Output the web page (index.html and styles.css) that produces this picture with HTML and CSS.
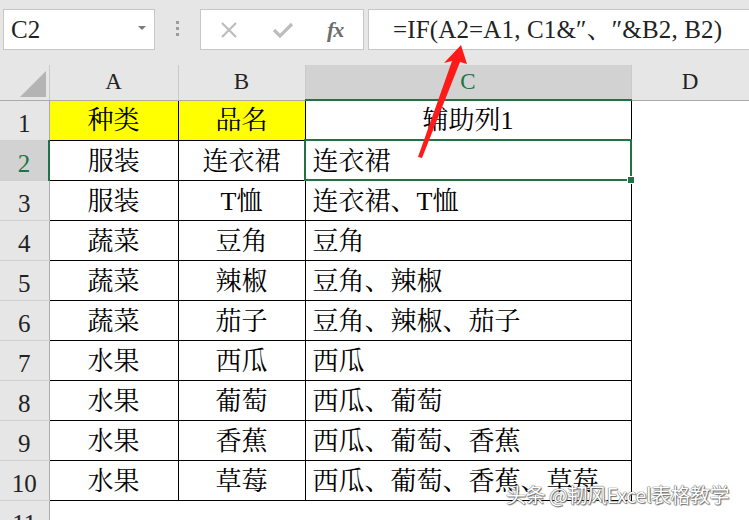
FILE: index.html
```html
<!DOCTYPE html>
<html lang="zh">
<head>
  <meta charset="UTF-8">
  <title>辅助列1</title>
  <link rel="stylesheet" href="styles.css">
</head>
<body>
  <div class="sheet">

    <!-- formula bar -->
    <div class="toolbar">
      <div class="namebox">
        <span>C2</span>
        <span class="caret"></span>
      </div>
      <div class="grip"><i></i><i></i><i></i></div>
      <div class="fxbox">
        <svg width="20" height="20" viewBox="0 0 20 20"><path d="M3 3 L17 17 M17 3 L3 17" stroke="#bdbdbd" stroke-width="2.2" fill="none"/></svg>
        <svg width="22" height="20" viewBox="0 0 22 20"><path d="M2 10 L8 16 L20 4" stroke="#bdbdbd" stroke-width="3.2" fill="none"/></svg>
        <span class="fx">fx</span>
      </div>
      <div class="formula">=IF(A2=A1, C1&amp;″、″&amp;B2, B2)</div>
    </div>

    <table class="grid">
      <colgroup>
        <col class="c-row">
        <col class="c-a">
        <col class="c-b">
        <col class="c-c">
        <col class="c-d">
      </colgroup>
      <thead>
        <tr>
          <th class="corner"><span class="tri"></span></th>
          <th>A</th>
          <th>B</th>
          <th class="active">C</th>
          <th>D</th>
        </tr>
      </thead>
      <tbody>
        <tr>
          <th>1</th>
          <td class="head">种类</td>
          <td class="head">品名</td>
          <td class="mid">辅助列1</td>
          <td class="blank"></td>
        </tr>
        <tr>
          <th class="active">2</th>
          <td>服装</td><td>连衣裙</td><td class="left sel">连衣裙<span class="handle"></span></td><td class="blank"></td>
        </tr>
        <tr>
          <th>3</th>
          <td>服装</td><td>T恤</td><td class="left">连衣裙、T恤</td><td class="blank"></td>
        </tr>
        <tr>
          <th>4</th>
          <td>蔬菜</td><td>豆角</td><td class="left">豆角</td><td class="blank"></td>
        </tr>
        <tr>
          <th>5</th>
          <td>蔬菜</td><td>辣椒</td><td class="left">豆角、辣椒</td><td class="blank"></td>
        </tr>
        <tr>
          <th>6</th>
          <td>蔬菜</td><td>茄子</td><td class="left">豆角、辣椒、茄子</td><td class="blank"></td>
        </tr>
        <tr>
          <th>7</th>
          <td>水果</td><td>西瓜</td><td class="left">西瓜</td><td class="blank"></td>
        </tr>
        <tr>
          <th>8</th>
          <td>水果</td><td>葡萄</td><td class="left">西瓜、葡萄</td><td class="blank"></td>
        </tr>
        <tr>
          <th>9</th>
          <td>水果</td><td>香蕉</td><td class="left">西瓜、葡萄、香蕉</td><td class="blank"></td>
        </tr>
        <tr>
          <th>10</th>
          <td>水果</td><td>草莓</td><td class="left">西瓜、葡萄、香蕉、草莓</td><td class="blank"></td>
        </tr>
        <tr class="empty">
          <th>11</th>
          <td class="blank"></td><td class="blank"></td><td class="blank"></td><td class="blank"></td>
        </tr>
      </tbody>
    </table>

    <!-- red arrow pointing at A2 -->
    <svg class="arrow" width="749" height="520" viewBox="0 0 749 520">
      <polygon points="461,45 467,64 460,62 422,158 418,157 452,61 444,63" fill="#ff1a1a"/>
    </svg>

    <div class="mark">头条 @韧风Excel表格教学</div>
  </div>
</body>
</html>
```

FILE: styles.css
```css
body {
  margin: 0;
  background: #fff;
}

.sheet {
  position: relative;
  width: 749px;
  height: 520px;
  overflow: hidden;
  font-family: "Liberation Serif", "Noto Serif CJK SC", "Noto Sans CJK SC", serif;
  color: #000;
}

/* formula bar */
.toolbar {
  height: 65px;
  box-sizing: border-box;
  display: flex;
  align-items: flex-start;
  padding: 9px 0 0 3px;
  background: #e6e6e6;
}

.namebox {
  width: 152px;
  height: 41px;
  box-sizing: border-box;
  border: 1px solid #c6c6c6;
  background: #fff;
  display: flex;
  align-items: center;
  justify-content: space-between;
  padding: 0 8px 0 7px;
  font-size: 25px;
  color: #222;
}

.caret {
  width: 0;
  height: 0;
  border-left: 4px solid transparent;
  border-right: 4px solid transparent;
  border-top: 4px solid #7a7a7a;
  margin-bottom: 4px;
}

.grip {
  width: 45px;
  display: flex;
  flex-direction: column;
  align-items: center;
  gap: 3px;
  padding-top: 12px;
}

.grip i {
  width: 3px;
  height: 3px;
  background: #9c9c9c;
}

.fxbox {
  width: 164px;
  height: 41px;
  box-sizing: border-box;
  border: 1px solid #c6c6c6;
  background: #fff;
  display: flex;
  align-items: center;
  gap: 33px;
  padding-left: 18px;
}

.fx {
  font-family: "Liberation Serif", serif;
  font-style: italic;
  font-weight: bold;
  font-size: 22px;
  color: #6e6e6e;
  letter-spacing: -1px;
}

.formula {
  flex: 1;
  margin-left: 4px;
  height: 41px;
  box-sizing: border-box;
  border: 1px solid #c6c6c6;
  border-right: none;
  background: #fff;
  padding-left: 24px;
  font-size: 25px;
  line-height: 39px;
  letter-spacing: 0.15px;
  white-space: nowrap;
  color: #222;
}

/* grid */
.grid {
  border-collapse: collapse;
  table-layout: fixed;
  width: 749px;
}

.c-row { width: 49px; }
.c-a { width: 129px; }
.c-b { width: 127px; }
.c-c { width: 326px; }
.c-d { width: 118px; }

thead tr {
  height: 35px;
}

tbody tr {
  height: 40px;
}

thead th {
  padding: 0;
  background: #e6e6e6;
  border-right: 1px solid #cacaca;
  border-bottom: 1px solid #ababab;
  font-weight: normal;
  font-size: 23px;
  line-height: 26px;
  color: #222;
}

thead th.active {
  background: #d2d2d2;
  color: #217346;
  border-bottom: 2px solid #217346;
}

.corner {
  position: relative;
}

.tri {
  position: absolute;
  right: 3px;
  bottom: 3px;
  width: 0;
  height: 0;
  border-left: 26px solid transparent;
  border-bottom: 26px solid #b4b4b4;
}

tbody th {
  padding: 0 0 1px;
  vertical-align: bottom;
  background: #e6e6e6;
  border-right: 1px solid #ababab;
  border-bottom: 1px solid #d0d0d0;
  font-weight: normal;
  font-size: 25px;
  line-height: 30px;
  color: #222;
}

tbody th.active {
  background: #d2d2d2;
  color: #217346;
  border-right: 2px solid #217346;
}

td {
  padding: 3px 0 0;
  border: 1px solid #000;
  text-align: center;
  font-size: 26px;
  line-height: 30px;
  vertical-align: middle;
  white-space: nowrap;
  overflow: visible;
}

td.head {
  background: #ffff00;
  padding-top: 1px;
}

td.mid {
  padding-top: 1px;
}

td.left {
  text-align: left;
  padding-left: 7px;
}

td.sel {
  position: relative;
  outline: 2px solid #217346;
  outline-offset: -1px;
}

.handle {
  position: absolute;
  right: -4px;
  bottom: -4px;
  width: 6px;
  height: 6px;
  background: #217346;
  border: 1px solid #fff;
}

td.blank {
  border: none;
  border-left: 1px solid #000;
}

tr.empty td.blank {
  border-left: none;
  border-top: 1px solid #000;
}

tr.empty td.blank:first-of-type,
tr.empty td.blank:last-child {
  border-top: none;
}

.arrow {
  position: absolute;
  left: 0;
  top: 0;
  pointer-events: none;
}

.mark {
  position: absolute;
  left: 506px;
  top: 480px;
  font-family: "Noto Sans CJK SC", sans-serif;
  font-size: 20px;
  color: #fff;
  text-shadow: 0 0 1px #555, 0 0 1px #555, 1px 1px 1px #777;
  letter-spacing: -0.5px;
  white-space: nowrap;
}
```
